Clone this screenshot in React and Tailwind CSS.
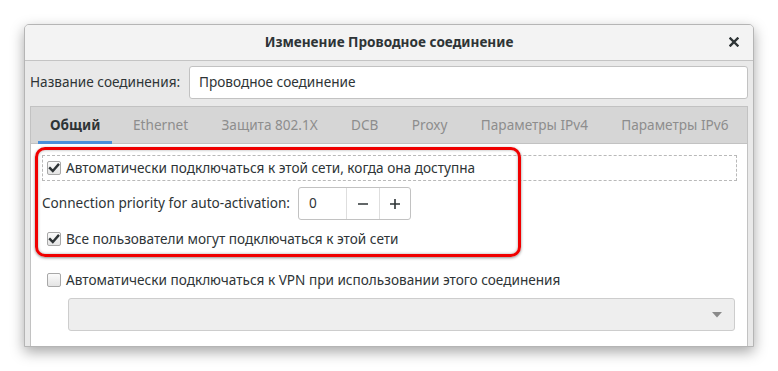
import React from "react";

function Check({ checked }) {
  return (
    <span className="w-[14px] h-[14px] rounded-[2px] border border-[#a8a8a8] bg-gradient-to-b from-[#fbfbfb] to-[#e4e4e4] flex items-center justify-center shrink-0">
      {checked && (
        <svg width="12" height="12" viewBox="0 0 12 12">
          <path d="M2 6.2 L4.8 9 L10.2 2.8" fill="none" stroke="#2e3436" strokeWidth="2.4" strokeLinecap="square" />
        </svg>
      )}
    </span>
  );
}

export default function App() {
  const tabs = ["Ethernet", "Защита 802.1X", "DCB", "Proxy", "Параметры IPv4", "Параметры IPv6"];
  return (
    <div className="w-[778px] h-[371px] bg-white overflow-hidden pt-[24px] pl-[24px] font-['Noto_Sans',sans-serif] text-[13.6px] text-[#2e3436]">
      <div className="w-[730px] h-[323px] flex flex-col bg-[#e9e9e9] border border-[#b5b5b5] rounded-t-[5px] shadow-[0_5px_14px_rgba(0,0,0,0.35)] overflow-hidden">
        <div className="h-[36px] shrink-0 bg-[#f3f3f3] border-b border-[#c4c4c4] flex items-center justify-center relative">
          <span className="font-bold text-[13.6px] text-[#2e3436] whitespace-nowrap">Изменение Проводное соединение</span>
          <span className="absolute right-[12px] top-[10px] w-[14px] h-[14px] flex items-center justify-center">
            <svg width="10" height="10" viewBox="0 0 10 10">
              <path d="M1.5 1.5 L8.5 8.5 M8.5 1.5 L1.5 8.5" stroke="#2e3436" strokeWidth="2.4" strokeLinecap="square" />
            </svg>
          </span>
        </div>
        <div className="flex-1 flex flex-col px-[5px] pt-[5px]">
          <div className="flex items-center h-[33px]">
            <span className="w-[159px] shrink-0 whitespace-nowrap">Название соединения:</span>
            <div className="flex-1 h-[33px] bg-white border border-[#c2c2c2] rounded-[3px] flex items-center pl-[9px]">
              Проводное соединение
            </div>
          </div>
          <div className="mt-[7px] flex-1 flex flex-col border border-[#c2c2c2] border-b-0">
            <div className="h-[37px] shrink-0 bg-[#d6d6d6] border-b border-[#c2c2c2] flex items-stretch pl-[3px] whitespace-nowrap">
              <div className="relative px-[12px] mx-[4px] flex items-center font-bold text-[#2e3436] shrink-0">
                Общий
                <span className="absolute left-0 right-0 bottom-[-1px] h-[3px] bg-[#4a90d9]"></span>
              </div>
              {tabs.map((t) => (
                <div key={t} className="px-[12.7px] mx-[4px] flex items-center text-[#8d8d8d] shrink-0">
                  {t}
                </div>
              ))}
            </div>
            <div className="flex-1 bg-white relative flex flex-col pt-[11px] whitespace-nowrap">
              <div className="ml-[11px] mr-[10px] h-[26px] border border-dashed border-[#b9b9b9] flex items-center pl-[4px] gap-[5px]">
                <Check checked />
                <span>Автоматически подключаться к этой сети, когда она доступна</span>
              </div>
              <div className="mt-[6px] ml-[11px] flex items-center h-[33px]">
                <span className="w-[256px] shrink-0">Connection priority for auto-activation:</span>
                <div className="h-[33px] w-[113px] flex border border-[#c2c2c2] rounded-[3px] bg-white">
                  <div className="w-[48px] flex items-center pl-[10px] border-r border-[#dedede]">0</div>
                  <div className="w-[33px] flex items-center justify-center border-r border-[#dedede]">
                    <svg width="12" height="12" viewBox="0 0 12 12"><path d="M1 6 H11" stroke="#2e3436" strokeWidth="1.6" /></svg>
                  </div>
                  <div className="flex-1 flex items-center justify-center">
                    <svg width="12" height="12" viewBox="0 0 12 12"><path d="M1 6 H11 M6 1 V11" stroke="#2e3436" strokeWidth="1.6" /></svg>
                  </div>
                </div>
              </div>
              <div className="mt-[6px] ml-[12px] h-[26px] flex items-center pl-[4px] gap-[5px]">
                <Check checked />
                <span>Все пользователи могут подключаться к этой сети</span>
              </div>
              <div className="mt-[15px] ml-[12px] h-[26px] flex items-center pl-[4px] gap-[5px]">
                <Check />
                <span>Автоматически подключаться к VPN при использовании этого соединения</span>
              </div>
              <div className="mt-[5px] ml-[37px] mr-[12px] h-[33px] bg-[#eeeeee] border border-[#cdcdcd] rounded-[3px] flex items-center justify-end pr-[12px]">
                <svg width="10" height="6" viewBox="0 0 10 6"><path d="M0 0 H10 L5 5.5 Z" fill="#8a8a8a" /></svg>
              </div>
              <div className="absolute left-[4px] top-[3px] w-[486px] h-[110px] border-[3px] border-[#f00000] rounded-[10px] shadow-[0_1px_3px_rgba(0,0,0,0.45),inset_0_0_3px_rgba(0,0,0,0.35)] pointer-events-none"></div>
            </div>
          </div>
        </div>
      </div>
    </div>
  );
}
